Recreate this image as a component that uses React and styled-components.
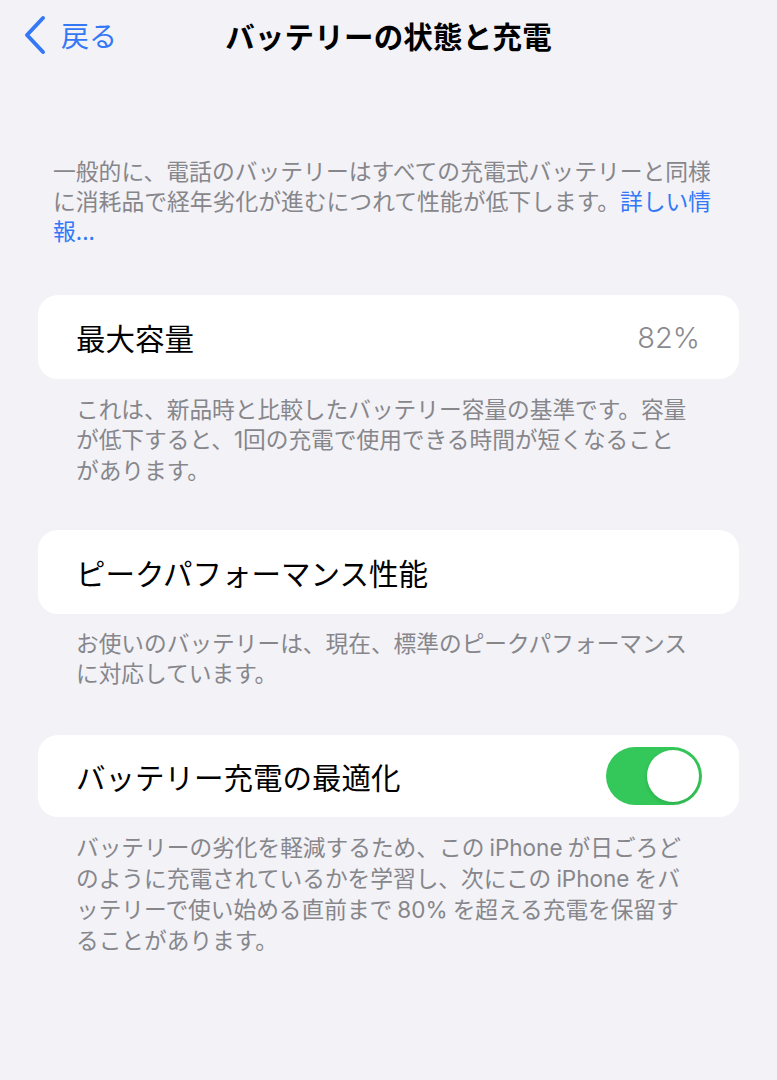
import React from "react";
import styled, { createGlobalStyle } from "styled-components";

const GlobalStyle = createGlobalStyle`
  html, body {
    margin: 0;
    padding: 0;
    background: #f2f2f7;
  }
  body {
    font-family: "Noto Sans CJK JP", "Noto Sans", "Liberation Sans", sans-serif;
    -webkit-font-smoothing: antialiased;
  }
`;

const Page = styled.div`
  width: 777px;
  min-height: 1080px;
  background: #f2f2f7;
  padding-bottom: 40px;
  box-sizing: border-box;
`;

const NavBar = styled.div`
  height: 70px;
  display: grid;
  grid-template-columns: 1fr auto 1fr;
  align-items: center;
`;

const BackButton = styled.div`
  display: flex;
  align-items: center;
  gap: 15px;
  padding-left: 24px;
  color: #3478f6;
  font-size: 28px;
  line-height: 1;
`;

const Title = styled.div`
  font-size: 29.5px;
  font-weight: 700;
  color: #000;
  letter-spacing: 0.2px;
`;

const Intro = styled.p`
  margin: 86px 0 0;
  padding: 0 53px;
  font-size: 22.8px;
  line-height: 30px;
  color: #86868b;
`;

const Link = styled.span`
  color: #3478f6;
`;

const Card = styled.div`
  margin: ${(p) => p.$top}px 38px 0;
  height: ${(p) => p.$h || 84}px;
  padding: 0 38px;
  box-sizing: border-box;
  background: #fff;
  border-radius: 20px;
  display: flex;
  align-items: center;
  justify-content: space-between;
`;

const Label = styled.span`
  font-size: 29.5px;
  color: #000;
`;

const Value = styled.span`
  font-size: 29px;
  color: #8a8a8e;
  font-family: "Inter", "Liberation Sans", sans-serif;
  font-weight: 300;
  padding-right: 1px;
`;

const Footer = styled.p`
  margin: ${(p) => p.$top || 15}px 0 0;
  padding: 0 60px 0 76px;
  font-size: 22.7px;
  line-height: 30px;
  color: #86868b;
  white-space: nowrap;
`;

const Latin = styled.span`
  font-family: "Inter", "Liberation Sans", sans-serif;
  font-size: 22.5px;
`;

const Switch = styled.div`
  width: 96px;
  height: 58px;
  border-radius: 29px;
  background: #34c759;
  position: relative;
  flex-shrink: 0;
  margin-right: -1px;
`;

const Knob = styled.div`
  position: absolute;
  top: 3px;
  right: 3px;
  width: 52px;
  height: 52px;
  border-radius: 50%;
  background: #fff;
  box-shadow: 0 2px 4px rgba(0, 0, 0, 0.12);
`;

const Chevron = () => (
  <svg width="22" height="40" viewBox="0 0 22 40" fill="none">
    <path
      d="M19 3 L3 20 L19 37"
      stroke="#3478f6"
      strokeWidth="4"
      strokeLinecap="round"
      strokeLinejoin="round"
    />
  </svg>
);

export default function App() {
  return (
    <>
      <GlobalStyle />
      <Page>
        <NavBar>
          <BackButton>
            <Chevron />
            <span>戻る</span>
          </BackButton>
          <Title>バッテリーの状態と充電</Title>
          <div />
        </NavBar>

        <Intro>
          一般的に、電話のバッテリーはすべての充電式バッテリーと同様に消耗品で経年劣化が進むにつれて性能が低下します。<Link>詳しい情報...</Link>
        </Intro>

        <Card $top={49}>
          <Label>最大容量</Label>
          <Value>82%</Value>
        </Card>
        <Footer>
          これは、新品時と比較したバッテリー容量の基準です。容量
          <br />
          が低下すると、<Latin>1</Latin>回の充電で使用できる時間が短くなること
          <br />
          があります。
        </Footer>

        <Card $top={45}>
          <Label>ピークパフォーマンス性能</Label>
        </Card>
        <Footer $top={14}>
          お使いのバッテリーは、現在、標準のピークパフォーマンス
          <br />
          に対応しています。
        </Footer>

        <Card $top={47} $h={82}>
          <Label>バッテリー充電の最適化</Label>
          <Switch>
            <Knob />
          </Switch>
        </Card>
        <Footer>
          バッテリーの劣化を軽減するため、この <Latin>iPhone</Latin> が日ごろど
          <br />
          のように充電されているかを学習し、次にこの <Latin>iPhone</Latin> をバ
          <br />
          ッテリーで使い始める直前まで <Latin>80%</Latin> を超える充電を保留す
          <br />
          ることがあります。
        </Footer>
      </Page>
    </>
  );
}
